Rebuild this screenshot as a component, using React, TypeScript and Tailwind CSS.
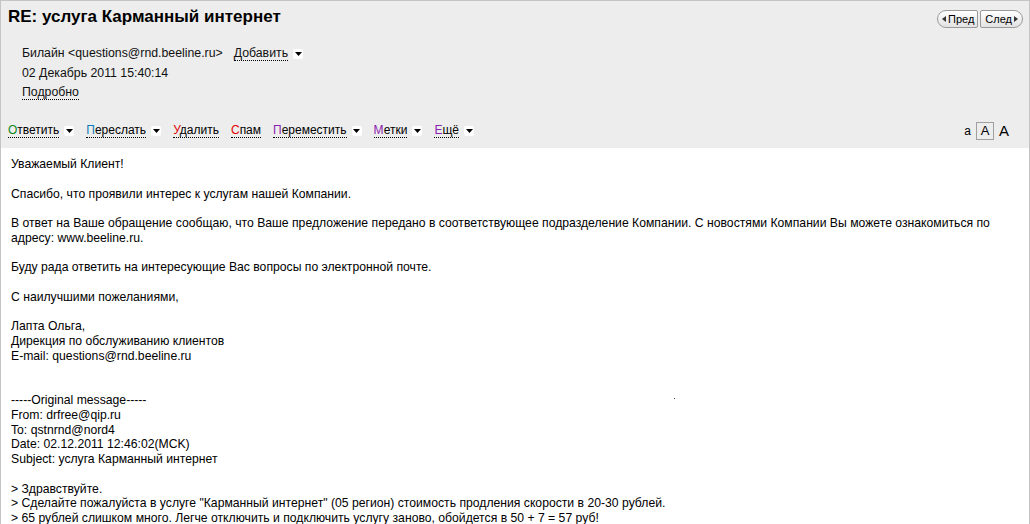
const Arrow = () => (
  <span className="inline-flex items-center justify-center w-[10px] h-[10px] bg-white rounded-[2px] ml-[5px] align-middle">
    <svg width="7" height="4" viewBox="0 0 7 4">
      <path d="M0 0h7L3.5 4z" fill="#000" />
    </svg>
  </span>
);

interface ActionProps {
  first: string;
  rest: string;
  color: string;
  menu?: boolean;
}

function Action({ first, rest, color, menu }: ActionProps) {
  return (
    <span className="inline-flex items-center">
      <span className="border-b border-dotted border-black leading-[13px]">
        <span style={{ color }}>{first}</span>
        {rest}
      </span>
      {menu && <Arrow />}
    </span>
  );
}

const bodyLines: string[] = [
  'Уважаемый Клиент!',
  '',
  'Спасибо, что проявили интерес к услугам нашей Компании.',
  '',
  'В ответ на Ваше обращение сообщаю, что Ваше предложение передано в соответствующее подразделение Компании. С новостями Компании Вы можете ознакомиться по',
  'адресу: www.beeline.ru.',
  '',
  'Буду рада ответить на интересующие Вас вопросы по электронной почте.',
  '',
  'С наилучшими пожеланиями,',
  '',
  'Лапта Ольга,',
  'Дирекция по обслуживанию клиентов',
  'E-mail: questions@rnd.beeline.ru',
  '',
  '',
  '-----Original message-----',
  'From: drfree@qip.ru',
  'To: qstnrnd@nord4',
  'Date: 02.12.2011 12:46:02(MCK)',
  'Subject: услуга Карманный интернет',
  '',
  '> Здравствуйте.',
  '> Сделайте пожалуйста в услуге "Карманный интернет" (05 регион) стоимость продления скорости в 20-30 рублей.',
  '> 65 рублей слишком много. Легче отключить и подключить услугу заново, обойдется в 50 + 7 = 57 руб!',
];

export default function App() {
  return (
    <div
      className="w-[1030px] h-[524px] overflow-hidden bg-white border-x border-t border-[#c4c4c4] text-black"
      style={{ fontFamily: '"Liberation Sans", Arial, sans-serif' }}
    >
      {/* Header */}
      <div className="bg-[#ededed] h-[147px]">
        <div className="flex justify-between items-start h-[40px] pl-[7px] pr-[6px] pt-[6px]">
          <h1 className="text-[17px] font-bold leading-[20px]">RE: услуга Карманный интернет</h1>
          <div className="flex gap-[2px] mt-[3px] text-[11px]">
            <button className="flex items-center gap-[2px] h-[18px] pl-[4px] pr-[3px] border border-[#9a9a9a] rounded-l-[9px] rounded-r-[2px] bg-gradient-to-b from-white to-[#e2e2e2]">
              <svg width="4" height="6" viewBox="0 0 4 6"><path d="M4 0v6L0 3z" fill="#333" /></svg>
              Пред
            </button>
            <button className="flex items-center gap-[2px] h-[18px] pl-[4px] pr-[4px] border border-[#9a9a9a] rounded-r-[9px] rounded-l-[2px] bg-gradient-to-b from-white to-[#e2e2e2]">
              След
              <svg width="4" height="6" viewBox="0 0 4 6"><path d="M0 0v6L4 3z" fill="#333" /></svg>
            </button>
          </div>
        </div>
        <div className="pl-[21px] pt-[3px] text-[12.3px] leading-[19.5px] text-[#111]">
          <div className="flex items-center">
            <span>Билайн &lt;questions@rnd.beeline.ru&gt;</span>
            <span className="ml-[11px] inline-flex items-center">
              <span className="border-b border-dotted border-black leading-[13px]">Добавить</span>
              <Arrow />
            </span>
          </div>
          <div>02 Декабрь 2011 15:40:14</div>
          <div>
            <span className="border-b border-dotted border-black">Подробно</span>
          </div>
        </div>
        <div className="flex justify-between items-center mt-[17px] pl-[7px] pr-[20px] text-[12px]">
          <div className="flex items-center gap-[12px]">
            <Action first="О" rest="тветить" color="#0a8a1a" menu />
            <Action first="П" rest="ереслать" color="#0a7ab8" menu />
            <Action first="У" rest="далить" color="#e00000" />
            <Action first="С" rest="пам" color="#e00000" />
            <Action first="П" rest="ереместить" color="#8a24b0" menu />
            <Action first="М" rest="етки" color="#8a24b0" menu />
            <Action first="Е" rest="щё" color="#8a24b0" menu />
          </div>
          <div className="flex items-center gap-[5px]">
            <span className="text-[12px]">a</span>
            <span className="w-[18px] h-[18px] border border-[#a0a0a0] flex items-center justify-center text-[13px]">A</span>
            <span className="text-[15px]">A</span>
          </div>
        </div>
      </div>

      {/* Body */}
      <div className="pt-[9px] pl-[10px] pr-[10px] text-[12.2px] leading-[14.75px] relative">
        {bodyLines.map((line, i) =>
          line ? (
            <div key={i} className="whitespace-nowrap">{line}</div>
          ) : (
            <div key={i} className="h-[14.75px]" />
          ),
        )}
        <span className="absolute left-[673px] top-[250px] w-[1px] h-[1px] bg-[#444]" />
      </div>
    </div>
  );
}
